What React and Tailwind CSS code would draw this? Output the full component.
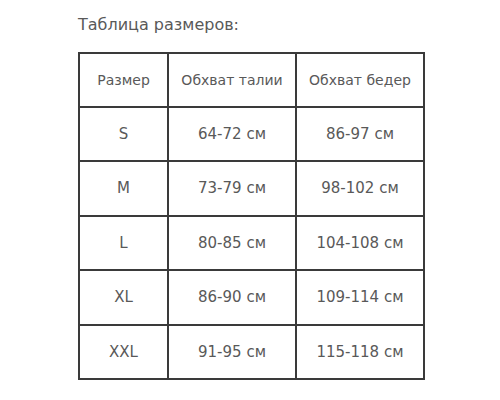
export default function App() {
  const rows = [
    ["S", "64-72 см", "86-97 см"],
    ["M", "73-79 см", "98-102 см"],
    ["L", "80-85 см", "104-108 см"],
    ["XL", "86-90 см", "109-114 см"],
    ["XXL", "91-95 см", "115-118 см"],
  ];
  const cell = "border-2 border-[#3a3a3a] text-center align-middle p-0";
  return (
    <div className="w-[500px] h-[400px] bg-white text-[#595959] font-['DejaVu_Sans',sans-serif] pl-[78px] pt-[15px]">
      <div className="text-[16px] leading-[20px] h-[37px]">Таблица размеров:</div>
      <table className="border-collapse text-[15px] w-[347px]">
        <tbody>
          <tr className="h-[54px] text-[14px]">
            <td className={cell + " w-[89px]"}>Размер</td>
            <td className={cell + " w-[128px]"}>Обхват талии</td>
            <td className={cell}>Обхват бедер</td>
          </tr>
          {rows.map((r) => (
            <tr key={r[0]} className="h-[54.4px]">
              <td className={cell}>{r[0]}</td>
              <td className={cell}>{r[1]}</td>
              <td className={cell}>{r[2]}</td>
            </tr>
          ))}
        </tbody>
      </table>
    </div>
  );
}
